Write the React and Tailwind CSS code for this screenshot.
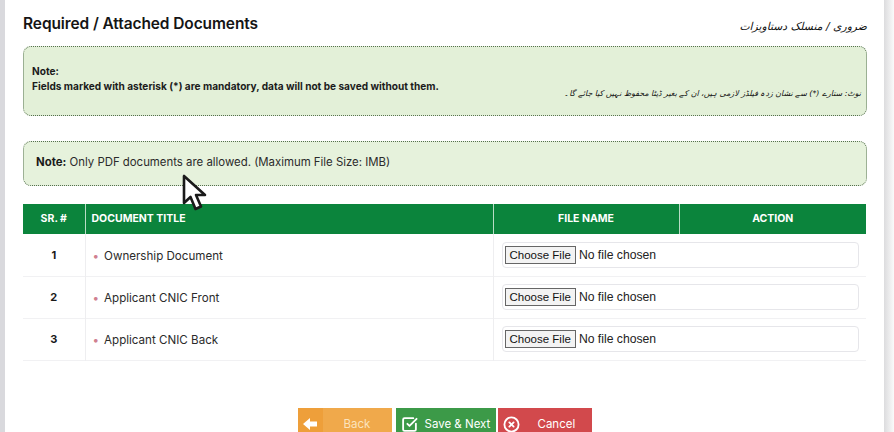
import React from "react";
import { SquareCheckBig, CircleX } from "lucide-react";

const documents = [
  { id: 1, title: "Ownership Document" },
  { id: 2, title: "Applicant CNIC Front" },
  { id: 3, title: "Applicant CNIC Back" },
];

const App = () => {
  return (
    <div className="relative flex h-[432px] w-[894px] overflow-hidden bg-white font-['Inter',sans-serif] text-[#1a1a1a]">
      <div className="w-[5px] shrink-0 bg-[#d9d9dd]" />

      <div className="w-[879px] shrink-0 pl-[18px] pr-[17px]">
        <div className="flex h-[46px] items-start justify-between">
          <h1 className="mt-[14px] text-[15.5px] leading-[20px] font-semibold tracking-[-0.1px] text-[#151515]">
            Required / Attached Documents
          </h1>
          <p
            dir="rtl"
            className="mt-[16px] font-['DejaVu_Sans',sans-serif] text-[10.8px] leading-[22px] font-medium text-[#111] italic"
          >
            ضروری / منسلک دستاویزات
          </p>
        </div>

        <div className="flex h-[70px] items-center justify-between rounded-lg border border-dotted border-[#55704e] bg-[#e3f0d8] pr-[5px] pl-2">
          <p className="mt-[-4px] text-[10.1px] leading-[15px] font-bold text-[#1c1c1c]">
            Note:
            <br />
            Fields marked with asterisk (*) are mandatory, data will not be saved without them.
          </p>
          <p
            dir="rtl"
            className="mt-[25px] font-['DejaVu_Sans',sans-serif] text-[7.9px] leading-[14px] text-[#111] italic"
          >
            نوٹ: ستارے (*) سے نشان زدہ فیلڈز لازمی ہیں، ان کے بغیر ڈیٹا محفوظ نہیں کیا جائے گا۔
          </p>
        </div>

        <div className="mt-[25px] flex h-[45px] items-center rounded-lg border border-dotted border-[#55704e] bg-[#e6f2dc] pl-3">
          <p className="mt-[-2px] text-[11.4px] text-[#2b2b2b]">
            <span className="font-bold text-[#1a1a1a]">Note:</span> Only PDF documents are allowed.
            (Maximum File Size: IMB)
          </p>
        </div>

        <table className="mt-[18px] w-[843px] table-fixed border-collapse">
          <thead>
            <tr className="h-[30px] bg-[#0b843c] text-[10.5px] font-bold text-white">
              <th className="w-[62px] border-r border-[#b9dcc5] text-center">SR. #</th>
              <th className="w-[408px] border-r border-[#b9dcc5] pl-[6px] text-left">DOCUMENT TITLE</th>
              <th className="w-[186px] border-r border-[#b9dcc5] text-center">FILE NAME</th>
              <th className="text-center">ACTION</th>
            </tr>
          </thead>
          <tbody>
            {documents.map((doc) => (
              <tr key={doc.id} className="h-[42px] border-b border-[#f1f1f3]">
                <td className="border-r border-[#eeeef0] text-center text-[11px] font-bold">{doc.id}</td>
                <td className="border-r border-[#eeeef0] pt-[3px] pl-[7px] text-[11.6px] text-[#2b2b2b]">
                  <span className="mr-[5px] text-[#d08090]">•</span>
                  {doc.title}
                </td>
                <td colSpan={2} className="pr-[7px] pl-[8px]">
                  <div className="flex h-[26px] items-center rounded border border-[#e6e6ea] bg-white pl-[2px]">
                    <input
                      type="file"
                      className="w-[300px] font-['Liberation_Sans',sans-serif] text-[12.2px] text-[#222] file:mr-[3px] file:h-[18px] file:rounded-none file:border file:border-[#666] file:bg-[#f3f3f3] file:px-[4px] file:text-[11.5px] file:text-[#111]"
                    />
                  </div>
                </td>
              </tr>
            ))}
          </tbody>
        </table>

        <div className="mt-[47px] flex justify-center pr-[1px] text-[11.5px] text-white">
          <button className="flex h-[30px] w-[94px] items-start bg-[#f0a94b]">
            <span className="flex h-full w-[25px] justify-center bg-[#ee9f3a] pt-[9px]">
              <svg width="15" height="14" viewBox="0 0 15 14" fill="white">
                <path d="M0 7 7 1v3.5h7v5H7V13Z" />
              </svg>
            </span>
            <span className="flex-1 pt-[8px] text-center text-[#fbe3bd]">Back</span>
          </button>
          <button className="ml-[4px] flex h-[30px] w-[100px] items-start bg-[#3c9a48] pl-[5px]">
            <SquareCheckBig size={17} strokeWidth={2.6} className="mt-[8px]" />
            <span className="ml-[7px] pt-[8px]">Save &amp; Next</span>
          </button>
          <button className="ml-[2px] flex h-[30px] w-[94px] items-start bg-[#d2494c] pl-[5px]">
            <CircleX size={17} strokeWidth={2.6} className="mt-[8px]" />
            <span className="ml-[18px] pt-[8px]">Cancel</span>
          </button>
        </div>
      </div>

      <div className="w-[10px] shrink-0 bg-gradient-to-r from-[#dcdcde] to-[#fafafa]" />

      {/* mouse pointer captured in the recording */}
      <svg
        className="absolute top-[174px] left-[182px]"
        width="26"
        height="40"
        viewBox="0 0 26 40"
      >
        <path
          d="M2 2v27l6.5-6 5 12 5.5-2.5-5-11.5h9Z"
          fill="white"
          stroke="#1a1a1a"
          strokeWidth="2.6"
          strokeLinejoin="round"
        />
      </svg>
    </div>
  );
};

export default App;
